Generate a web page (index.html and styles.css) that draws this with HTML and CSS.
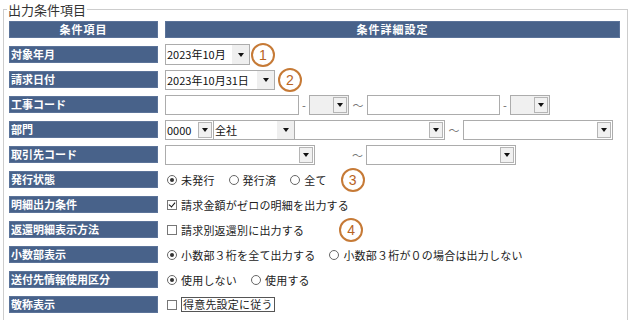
FILE: index.html
```html
<!DOCTYPE html>
<html lang="ja">
<head>
<meta charset="utf-8">
<title>出力条件項目</title>
<link rel="stylesheet" href="styles.css">
</head>
<body>
<fieldset class="panel">
  <legend class="panel-title">出力条件項目</legend>
  <div class="grid">
    <div class="hd">条件項目</div>
    <div class="hd">条件詳細設定</div>

    <div class="lbl">対象年月</div>
    <div class="val">
      <div class="sel tall w84"><span class="txt">2023年10月</span><span class="arr flat"></span></div>
      <span class="num m1">1</span>
    </div>

    <div class="lbl">請求日付</div>
    <div class="val">
      <div class="sel w109"><span class="txt">2023年10月31日</span><span class="arr flat"></span></div>
      <span class="num m3">2</span>
    </div>

    <div class="lbl">工事コード</div>
    <div class="val">
      <div class="inp w133"></div>
      <span class="dash">-</span>
      <div class="sel dis w39"><span class="txt"></span><span class="arr box"></span></div>
      <span class="tilde">～</span>
      <div class="inp w132"></div>
      <span class="dash">-</span>
      <div class="sel dis w39"><span class="txt"></span><span class="arr box"></span></div>
    </div>

    <div class="lbl">部門</div>
    <div class="val">
      <div class="sel w49"><span class="txt">0000</span><span class="arr box"></span></div>
      <div class="sel w81 nl"><span class="txt">全社</span><span class="arr flat"></span></div>
      <div class="sel w149 nl"><span class="txt"></span><span class="arr box"></span></div>
      <span class="tilde">～</span>
      <div class="sel w149"><span class="txt"></span><span class="arr box"></span></div>
    </div>

    <div class="lbl">取引先コード</div>
    <div class="val">
      <div class="sel w149"><span class="txt"></span><span class="arr box"></span></div>
      <span class="tilde wide">～</span>
      <div class="sel w149"><span class="txt"></span><span class="arr box"></span></div>
    </div>

    <div class="lbl">発行状態</div>
    <div class="val opts">
      <label class="opt"><span class="rd on"></span>未発行</label>
      <label class="opt"><span class="rd"></span>発行済</label>
      <label class="opt"><span class="rd"></span>全て</label>
      <span class="num">3</span>
    </div>

    <div class="lbl">明細出力条件</div>
    <div class="val opts">
      <label class="opt"><span class="cb on"></span>請求金額がゼロの明細を出力する</label>
    </div>

    <div class="lbl">返還明細表示方法</div>
    <div class="val opts">
      <label class="opt"><span class="cb"></span>請求別返還別に出力する</label>
      <span class="num m21">4</span>
    </div>

    <div class="lbl">小数部表示</div>
    <div class="val opts">
      <label class="opt"><span class="rd on"></span>小数部３桁を全て出力する</label>
      <label class="opt"><span class="rd"></span>小数部３桁が０の場合は出力しない</label>
    </div>

    <div class="lbl">送付先情報使用区分</div>
    <div class="val opts">
      <label class="opt"><span class="rd on"></span>使用しない</label>
      <label class="opt"><span class="rd"></span>使用する</label>
    </div>

    <div class="lbl">敬称表示</div>
    <div class="val opts">
      <label class="opt"><span class="cb"></span><span class="focus">得意先設定に従う</span></label>
    </div>
  </div>
</fieldset>
</body>
</html>
```

FILE: styles.css
```css
html, body {
  margin: 0;
  padding: 0;
  background: #ffffff;
}
body {
  font-family: "Noto Sans CJK JP", "Noto Sans", sans-serif;
  font-size: 11px;
  color: #222;
}
.panel {
  margin: 0 0 0 3px;
  width: 625px;
  box-sizing: border-box;
  border: 1px solid #cdcdcd;
  padding: 2px 7px 10px 5px;
  min-width: 0;
}
.panel-title {
  font-size: 13px;
  line-height: 19px;
  padding: 0 1px;
  margin-left: -2px;
  color: #333;
}
.grid {
  display: grid;
  grid-template-columns: 149px 455px;
  grid-auto-rows: 17px;
  column-gap: 7px;
  row-gap: 8px;
}
.hd, .lbl {
  background: #48628a;
  box-shadow: inset 0 0 0 1px #5b7399;
  color: #fff;
  font-weight: bold;
  line-height: 17px;
  white-space: nowrap;
}
.hd {
  text-align: center;
  letter-spacing: 1px;
}
.lbl {
  padding-left: 2px;
}
.val {
  display: flex;
  align-items: center;
  height: 17px;
  white-space: nowrap;
}
.sel, .inp {
  box-sizing: border-box;
  height: 20px;
  border: 1px solid #acacac;
  background: #fff;
  display: flex;
  flex: none;
}
.sel.tall { height: 21px; }
.sel.dis { background: #f0f0f0; }
.sel.nl { border-left: none; }
.txt {
  flex: 1;
  padding-left: 1px;
  line-height: 18px;
  color: #111;
  overflow: hidden;
}
.arr {
  width: 15px;
  flex: none;
  display: flex;
  align-items: center;
  justify-content: center;
  box-sizing: border-box;
}
.arr::after {
  content: "";
  border-left: 3.5px solid transparent;
  border-right: 3.5px solid transparent;
  border-top: 4px solid #111;
}
.arr.flat {
  width: 17px;
  background: #efefef;
}
.arr.box {
  width: 14px;
  margin: 1px;
  border: 1px solid #b5b5b5;
  background: #f1f1f1;
}
.w39 { width: 40px; }
.w49 { width: 49px; }
.w81 { width: 81px; }
.w84 { width: 85px; }
.w109 { width: 110px; }
.w132 { width: 133px; }
.w133 { width: 134px; }
.w149 { width: 150px; }
.dash {
  width: 10px;
  text-align: center;
  color: #666;
}
.tilde {
  width: 18px;
  text-align: center;
  color: #777;
}
.tilde.wide {
  width: 51px;
  text-align: right;
  padding-right: 3px;
  box-sizing: border-box;
}
.num {
  flex: none;
  box-sizing: border-box;
  width: 24px;
  height: 24px;
  border: 2px solid #c67a36;
  border-radius: 50%;
  color: #b8621e;
  font-family: "Liberation Sans", sans-serif;
  font-size: 14px;
  line-height: 20px;
  text-align: center;
}
.m1 { margin-left: 1px; }
.m3 { margin-left: 3px; }
.m21 { margin-left: 21px; }
.opts { gap: 14px; padding-left: 2px; }
.opt {
  display: flex;
  align-items: center;
  color: #222;
  letter-spacing: 0.2px;
}
.rd {
  box-sizing: border-box;
  width: 10px;
  height: 10px;
  border: 1px solid #666;
  border-radius: 50%;
  margin-right: 4px;
  display: flex;
  align-items: center;
  justify-content: center;
}
.rd.on::after {
  content: "";
  width: 4px;
  height: 4px;
  border-radius: 50%;
  background: #333;
}
.cb {
  box-sizing: border-box;
  width: 10px;
  height: 10px;
  border: 1px solid #777;
  margin-right: 4px;
  position: relative;
}
.cb.on::after {
  content: "";
  position: absolute;
  left: 2px;
  top: 0px;
  width: 3px;
  height: 5px;
  border-right: 1.5px solid #111;
  border-bottom: 1.5px solid #111;
  transform: rotate(40deg);
}
.focus {
  border: 1px solid #555;
  padding: 0 1px;
  line-height: 13px;
}
```
